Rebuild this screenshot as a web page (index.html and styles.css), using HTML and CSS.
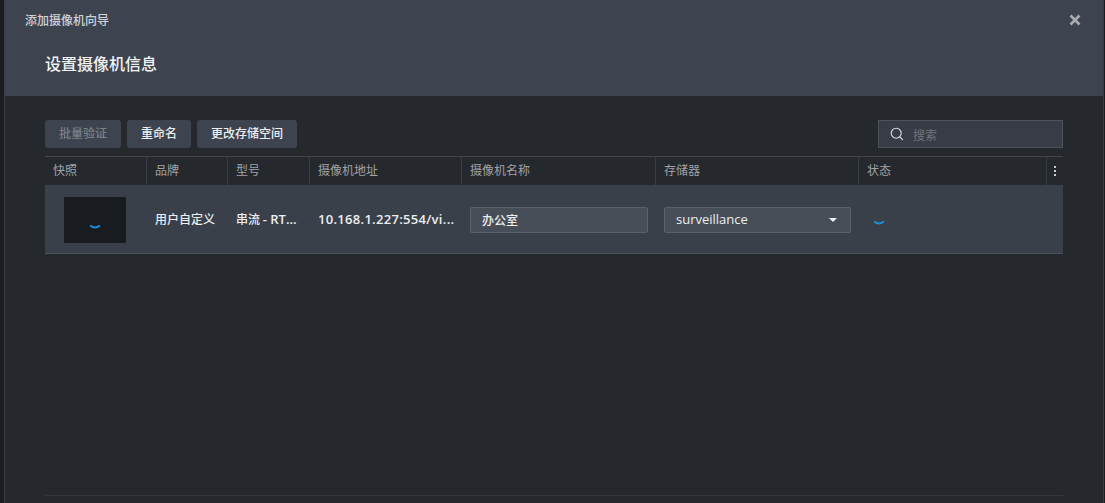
FILE: index.html
```html
<!DOCTYPE html>
<html lang="zh">
<head>
<meta charset="utf-8">
<title>添加摄像机向导</title>
<link rel="stylesheet" href="styles.css">
</head>
<body>
<div class="window">
  <header class="head">
    <div class="title-bar">
      <span class="app-title">添加摄像机向导</span>
      <svg class="close" viewBox="0 0 12 12" width="12" height="12"><path d="M1.5 1.5l9 9M10.5 1.5l-9 9" stroke="#a9adb3" stroke-width="2.6" fill="none"/></svg>
    </div>
    <h1 class="step">设置摄像机信息</h1>
  </header>
  <main class="body">
    <div class="toolbar">
      <button class="btn disabled">批量验证</button>
      <button class="btn">重命名</button>
      <button class="btn">更改存储空间</button>
      <div class="search">
        <svg viewBox="0 0 14 14" width="14" height="14"><circle cx="6.2" cy="6.2" r="5" stroke="#e0e2e4" stroke-width="1.1" fill="none"/><path d="M9.8 9.8l3 3" stroke="#e0e2e4" stroke-width="1.2"/></svg>
        <span class="placeholder">搜索</span>
      </div>
    </div>
    <div class="table">
      <div class="row thead">
        <div class="th">快照</div>
        <div class="th">品牌</div>
        <div class="th">型号</div>
        <div class="th">摄像机地址</div>
        <div class="th">摄像机名称</div>
        <div class="th">存储器</div>
        <div class="th">状态</div>
        <div class="th more"><span class="dots"><i></i><i></i><i></i></span></div>
      </div>
      <div class="row tbody">
        <div class="td"><div class="thumb"><svg class="spin" viewBox="0 0 12 6" width="12" height="6"><path d="M1.2 1.5Q6 5.500 10.800 1.500" stroke="#1b8fd6" stroke-width="2" fill="none"/></svg></div></div>
        <div class="td"><span class="cell-text">用户自定义</span></div>
        <div class="td"><span class="cell-text">串流 <span class="latin">- RT...</span></span></div>
        <div class="td"><span class="cell-text latin address">10.168.1.227:554/vi...</span></div>
        <div class="td"><div class="field name">办公室</div></div>
        <div class="td"><div class="field select"><span>surveillance</span><i class="caret"></i></div></div>
        <div class="td status"><svg class="spin" viewBox="0 0 12 6" width="12" height="6"><path d="M1.2 1.5Q6 5.500 10.800 1.500" stroke="#1b8fd6" stroke-width="2" fill="none"/></svg></div>
        <div class="td"></div>
      </div>
    </div>
    <div class="foot-line"></div>
  </main>
</div>
</body>
</html>
```
FILE: styles.css
```css
* { box-sizing: border-box; }
html, body { margin: 0; height: 100%; }
body {
  background: #1a1c20;
  font-family: "Noto Sans CJK SC", "Open Sans", sans-serif;
  font-size: 12px;
  overflow: hidden;
  padding: 0 1px 0 4px;
}
.window {
  height: 503px;
  display: flex;
  flex-direction: column;
  background: #25282d;
  border-left: 1px solid #3a3f47;
  border-right: 1px solid #3a3f47;
}
.head {
  height: 96px;
  background: #3d4450;
  flex: none;
}
.title-bar {
  height: 39px;
  display: flex;
  align-items: center;
  justify-content: space-between;
  padding: 0 22px 0 20px;
}
.app-title { color: #d0d3d6; font-size: 12px; font-weight: 500; }
.close { display: block; }
.step {
  margin: 0;
  padding: 0 0 0 40px;
  color: #f2f3f4;
  font-size: 16px;
  font-weight: 500;
  line-height: 48px;
  height: 48px;
}
.body {
  flex: 1;
  display: flex;
  flex-direction: column;
  padding: 24px 40px 0 40px;
}
.toolbar { display: flex; gap: 6px; height: 28px; align-items: stretch; }
.btn {
  font: inherit;
  font-weight: 500;
  color: #eceef0;
  background: #3d4450;
  border: 0;
  border-radius: 3px;
  padding: 0 14px 4px;
  height: 28px;
}
.btn.disabled { color: #7b8087; }
.search {
  margin-left: auto;
  width: 185px;
  background: #373c46;
  border: 1px solid #4c525b;
  display: flex;
  align-items: center;
  gap: 9px;
  padding-left: 11px;
}
.search svg { display: block; }
.placeholder { color: #71757c; font-size: 12px; }
.table { margin-top: 8px; border-top: 1px solid #43474d; }
.row { display: grid; grid-template-columns: 102px 81px 82px 152px 194px 203px 188px 16px; }
.thead { height: 28px; }
.th {
  color: #a0a3a8;
  padding-left: 8px;
  line-height: 26px;
  border-right: 1px solid #383c43;
}
.th:last-child { border-right: 0; }
.th.more { padding: 0; display: flex; justify-content: center; align-items: center; }
.dots { display: flex; flex-direction: column; gap: 2px; }
.dots i { width: 2px; height: 2px; background: #c9cbce; display: block; }
.tbody {
  height: 69px;
  background: #3a404a;
  border-bottom: 1px solid #4c525b;
}
.td { display: flex; align-items: center; padding-left: 8px; min-width: 0; }
.td:first-child { padding-left: 19px; padding-top: 1px; }
.cell-text { color: #eceef0; white-space: nowrap; font-weight: 500; font-size: 12px; line-height: 16px; }
.latin { font-family: "Open Sans", "Noto Sans CJK SC", sans-serif; font-size: 13px; font-weight: 600; }
.address { letter-spacing: .3px; }
.thumb {
  width: 62px;
  height: 46px;
  background: #181b20;
  display: flex;
  align-items: flex-end;
  justify-content: center;
  padding-bottom: 13px;
}
.spin { display: block; }
.status { padding-left: 14px; padding-top: 7px; }
.field {
  height: 26px;
  margin-top: 1px;
  background: #484e58;
  border: 1px solid #5c626b;
  border-radius: 2px;
  color: #eceef0;
  font-weight: 500;
  padding-left: 11px;
  line-height: 24px;
  width: 178px;
}
.select {
  width: 187px;
  display: flex;
  justify-content: space-between;
  align-items: center;
  padding-right: 13px;
  font-family: "Open Sans", "Noto Sans CJK SC", sans-serif;
  font-weight: 500;
  font-size: 13px;
}
.select span { margin-top: -2px; }
.caret {
  width: 0;
  height: 0;
  border-left: 4px solid transparent;
  border-right: 4px solid transparent;
  border-top: 4px solid #f0f1f2;
}
.foot-line { margin-top: auto; margin-bottom: 7px; height: 1px; background: #34383e; }
```
